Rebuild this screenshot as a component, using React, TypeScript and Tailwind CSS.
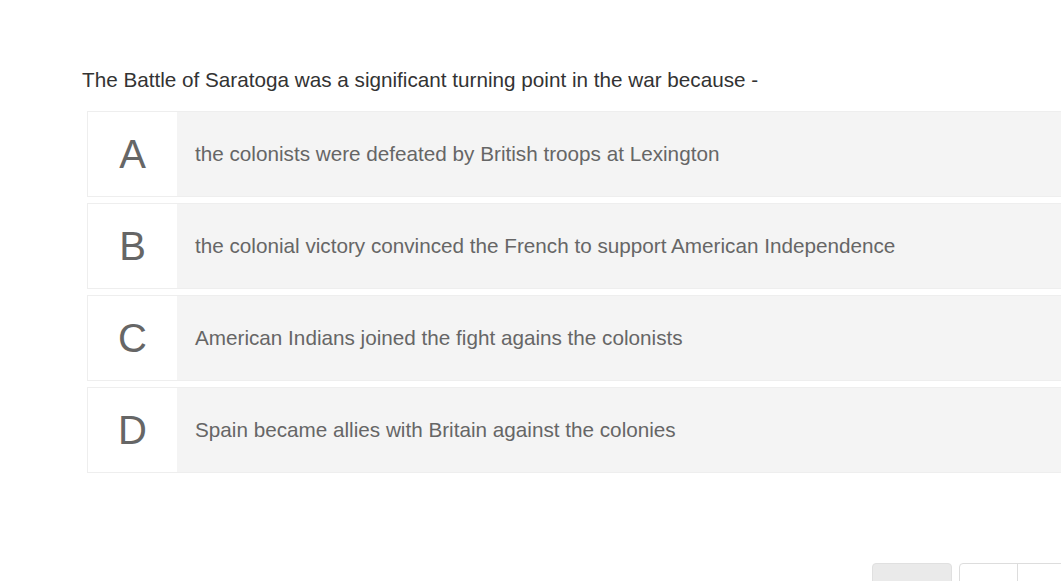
const options = [
  { letter: 'A', text: 'the colonists were defeated by British troops at Lexington' },
  { letter: 'B', text: 'the colonial victory convinced the French to support American Independence' },
  { letter: 'C', text: 'American Indians joined the fight agains the colonists' },
  { letter: 'D', text: 'Spain became allies with Britain against the colonies' },
];

export default function App() {
  return (
    <div className="w-[1061px] h-[581px] overflow-hidden bg-white relative font-['Liberation_Sans',Arial,sans-serif]">
      <div className="pt-[67px] pl-[82px]">
        <p className="text-[20.7px] leading-[26px] text-[#333]">
          The Battle of Saratoga was a significant turning point in the war because -
        </p>
        <div className="mt-[18px] ml-[5px] w-[1100px] flex flex-col gap-[6px]">
          {options.map((o) => (
            <div key={o.letter} className="flex h-[86px] border border-[#eeeeee]">
              <div className="w-[89px] bg-white flex items-center justify-center text-[40px] text-[#666] font-light">
                {o.letter}
              </div>
              <div className="flex-1 bg-[#f4f4f4] flex items-center pl-[18px] text-[20.7px] text-[#666]">
                {o.text}
              </div>
            </div>
          ))}
        </div>
      </div>
      <div className="absolute left-[872px] top-[563px] flex gap-[7px]">
        <div className="w-[80px] h-[30px] bg-[#eaeaea] border border-[#e0e0e0] rounded-[4px]" />
        <div className="flex h-[30px] border border-[#dddddd] rounded-[4px] bg-white">
          <div className="w-[58px] border-r border-[#dddddd]" />
          <div className="w-[60px]" />
        </div>
      </div>
    </div>
  );
}
